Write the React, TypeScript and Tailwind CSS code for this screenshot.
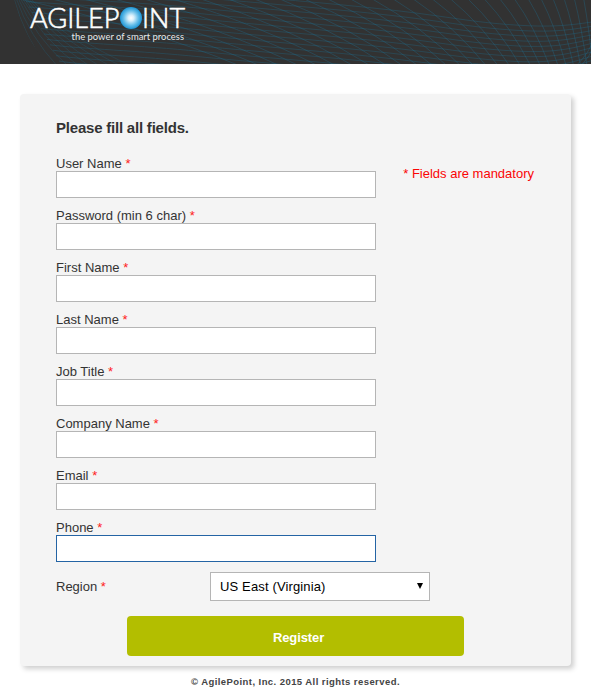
import React, { useState } from 'react';

interface Field {
  id: string;
  label: string;
  type: string;
}

const fields: Field[] = [
  { id: 'username', label: 'User Name', type: 'text' },
  { id: 'password', label: 'Password (min 6 char)', type: 'password' },
  { id: 'firstName', label: 'First Name', type: 'text' },
  { id: 'lastName', label: 'Last Name', type: 'text' },
  { id: 'jobTitle', label: 'Job Title', type: 'text' },
  { id: 'company', label: 'Company Name', type: 'text' },
  { id: 'email', label: 'Email', type: 'email' },
  { id: 'phone', label: 'Phone', type: 'tel' },
];

// Wave lines that run across the header, left to right
const waves = Array.from({ length: 16 }, (_, i) => {
  const y = i * 5.4;
  return `M${14 + i * 3} ${y - 20} C80 ${y - 16} 140 ${y - 14} 200 ${y - 8} S330 ${y + 3} 391 ${y + 10} S470 ${22 + i * 5.3} 515 ${25 + i * 5.2} S575 ${24 + i * 4.6} 600 ${21 + i * 4.1}`;
});

// Diagonal lines, steeper and closer together towards the right edge
const diagonals = Array.from({ length: 29 }, (_, i) => {
  const distance = i * 8 + i * i * 0.45;
  const x = 592 - distance;
  const run = 6 + distance * 0.38;
  return `M${x} -2 Q${x + run * 0.58} 27 ${x + run} 66`;
});

// Dense fan at the left edge of the mesh
const fan = Array.from({ length: 9 }, (_, i) => `M${14 + i * 2} -2 Q${24 + i * 5} 36 ${48 + i * 11} 68`);

const Header: React.FC = () => (
  <header className="h-16 bg-[#323232] overflow-hidden">
    <svg width="591" height="64" viewBox="0 0 591 64" role="img" aria-label="AgilePoint">
      <defs>
        <radialGradient id="orb" cx="50%" cy="50%" r="52%">
          <stop offset="0" stopColor="#ffffff" />
          <stop offset="0.25" stopColor="#d9f0fb" />
          <stop offset="0.65" stopColor="#62bce8" />
          <stop offset="1" stopColor="#1590d2" />
        </radialGradient>
        <clipPath id="mesh">
          <path d="M14 0 Q24 38 48 64 H591 V0 Z" />
        </clipPath>
      </defs>
      <g fill="none" stroke="#1d7195" strokeWidth="0.7" clipPath="url(#mesh)">
        <g strokeOpacity="0.46">
          {waves.map((d) => (
            <path key={d} d={d} />
          ))}
        </g>
        <g strokeOpacity="0.48">
          {diagonals.map((d) => (
            <path key={d} d={d} />
          ))}
          <path d="M594 38 Q590 52 576 66" />
          <path d="M594 46 Q590 56 581 66" />
        </g>
        <g strokeOpacity="0.34">
          {fan.map((d) => (
            <path key={d} d={d} />
          ))}
        </g>
      </g>
      <g fill="#ffffff" className="font-['Lato',sans-serif]">
        <text x="30" y="28" fontSize="28" fontWeight="300" stroke="#ffffff" strokeWidth="0.6" textLength="89.5" lengthAdjust="spacingAndGlyphs">
          AGILEP
        </text>
        <circle cx="131" cy="18" r="11" fill="url(#orb)" />
        <text x="142" y="28" fontSize="28" fontWeight="300" stroke="#ffffff" strokeWidth="0.6" textLength="43" lengthAdjust="spacingAndGlyphs">
          INT
        </text>
        <text x="71.5" y="39.5" fontSize="9" fillOpacity="0.9" textLength="112.5" lengthAdjust="spacingAndGlyphs">
          the power of smart process
        </text>
      </g>
    </svg>
  </header>
);

const Required: React.FC = () => <span className="text-[#ff2020]">*</span>;

const App: React.FC = () => {
  const [activeField, setActiveField] = useState('phone');

  return (
    <div className="w-[591px] h-[687px] bg-white overflow-hidden font-['Liberation_Sans',Arial,sans-serif] text-[13px] text-[#333]">
      <Header />

      <main className="mt-[30px] ml-5 w-[551px] h-[572px] rounded bg-[#f4f4f4] shadow-[3px_3px_5px_#d0d0d0] px-9 pt-[25px]">
        <h1 className="text-[15px] leading-[18px] font-bold tracking-[-0.21px]">Please fill all fields.</h1>

        <form onSubmit={(e) => e.preventDefault()}>
          <div className="flex justify-between mt-[19px]">
            <div className="w-80 flex flex-col gap-2.5">
              {fields.map((field) => (
                <div key={field.id}>
                  <label htmlFor={field.id} className="block leading-[15px]">
                    {field.label} <Required />
                  </label>
                  <input
                    id={field.id}
                    type={field.type}
                    onFocus={() => setActiveField(field.id)}
                    className={`block w-80 h-[27px] px-2 bg-white border outline-none ${
                      activeField === field.id ? 'border-[#2464a4]' : 'border-[#b5b5b5]'
                    }`}
                  />
                </div>
              ))}
            </div>
            <p className="mt-2.5 mr-px leading-[15px] text-[#fa0505]">* Fields are mandatory</p>
          </div>

          {/* Region */}
          <div className="flex items-center mt-2.5">
            <label htmlFor="region" className="w-[154px]">
              Region <Required />
            </label>
            <div className="relative">
              <select
                id="region"
                className="block w-[220px] h-[29px] pl-[9px] appearance-none bg-white border border-[#b5b5b5] text-black tracking-[0.14px]"
              >
                <option>US East (Virginia)</option>
              </select>
              <svg className="absolute right-[7px] top-[11px] pointer-events-none" width="6" height="6" viewBox="0 0 6 6">
                <path d="M0 0 H6 L3 6 Z" fill="#000" />
              </svg>
            </div>
          </div>

          <button
            type="submit"
            className="block mt-[15px] ml-[71px] w-[337px] h-10 rounded bg-[#b3be00] text-white font-bold tracking-[-0.1px] pt-[3px] pl-1.5"
          >
            Register
          </button>
        </form>
      </main>

      <footer className="mt-[9px] text-center text-[9.5px] leading-[13px] font-bold tracking-[0.43px] text-[#444]">
        © AgilePoint, Inc. 2015 All rights reserved.
      </footer>
    </div>
  );
};

export default App;
